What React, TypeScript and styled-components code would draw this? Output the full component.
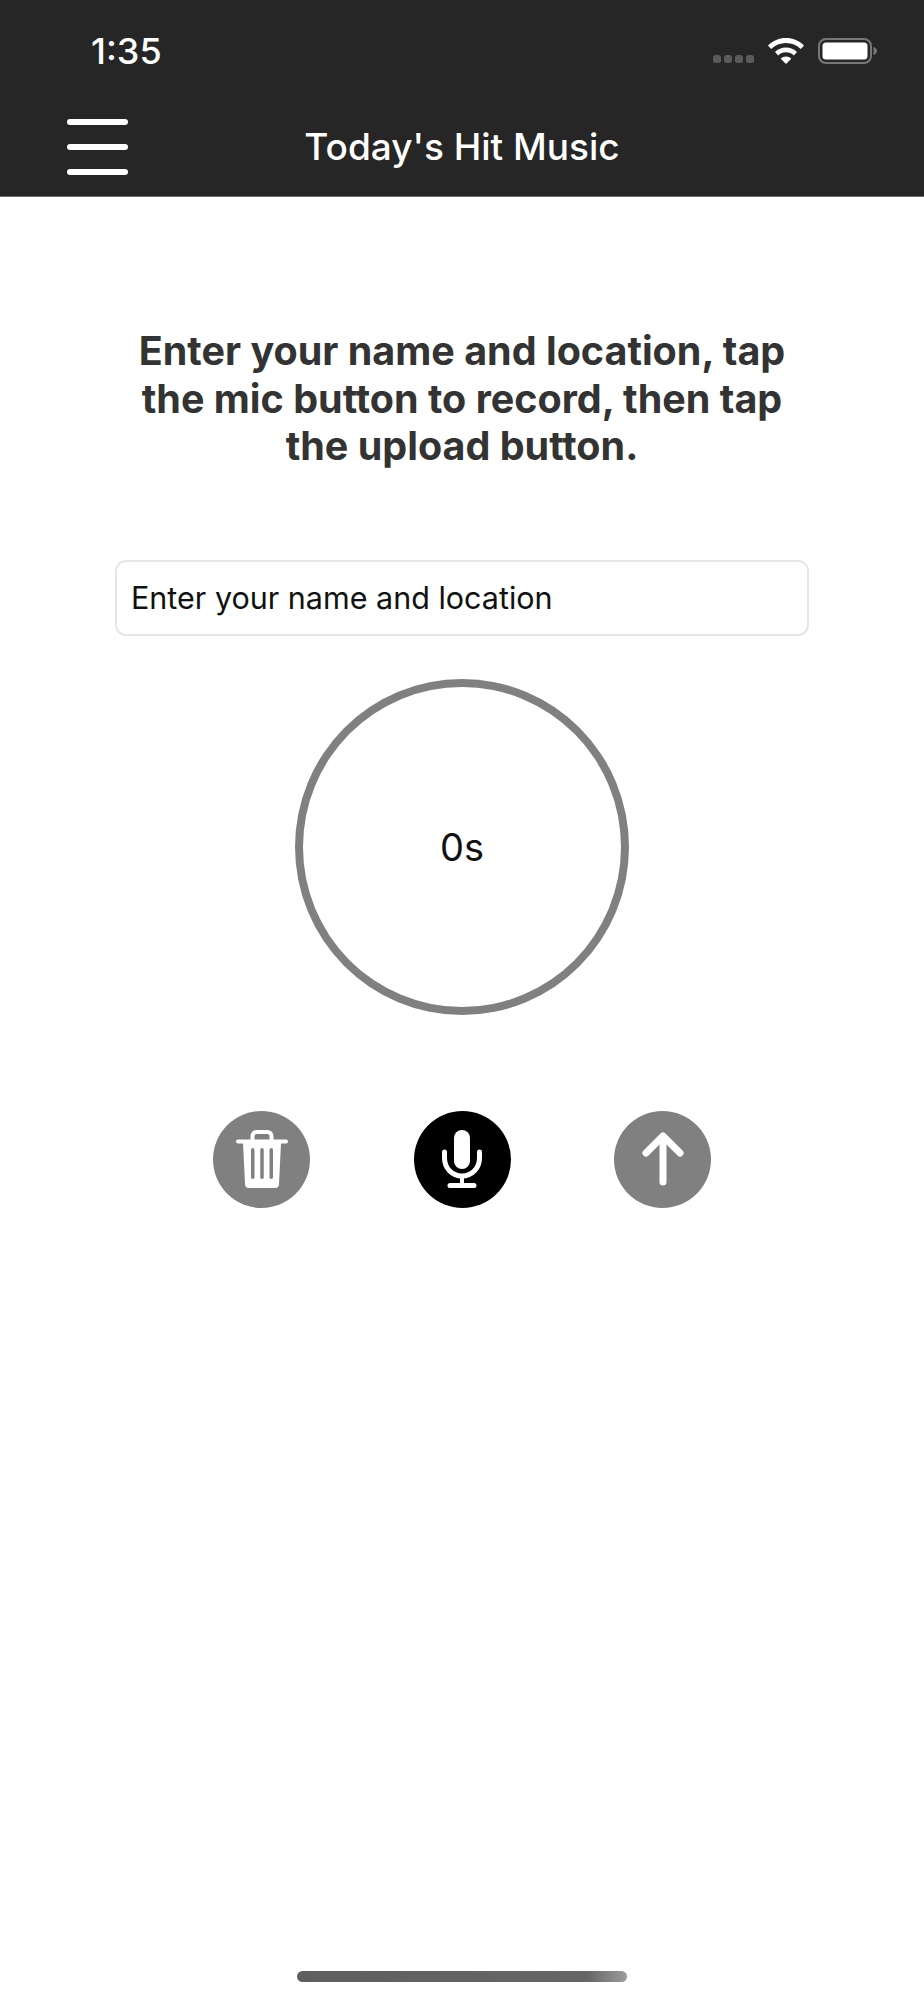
import React from 'react';
import styled, { createGlobalStyle } from 'styled-components';

const GlobalStyle = createGlobalStyle`
  html, body {
    margin: 0;
    padding: 0;
    background: #fff;
  }
  body {
    font-family: Inter, "Liberation Sans", sans-serif;
  }
`;

const Page = styled.div`
  display: flex;
  flex-direction: column;
  width: 924px;
  height: 2000px;
  background: #fff;
  overflow: hidden;
`;

const Header = styled.header`
  flex: none;
  height: 196px;
  background: #262626;
  border-bottom: 1px solid #6e6e6e;
  color: #fff;
`;

const StatusBar = styled.div`
  display: flex;
  align-items: center;
  justify-content: space-between;
  height: 50px;
  padding: 26px 47px 0 91px;
`;

const Time = styled.span`
  font-size: 36px;
  font-weight: 500;
  line-height: 50px;
`;

const StatusIcons = styled.div`
  display: flex;
  align-items: center;
  gap: 14px;
`;

const SignalDots = styled.div`
  display: flex;
  gap: 3px;
  margin-top: 16px;
`;

const SignalDot = styled.span`
  width: 8px;
  height: 8px;
  border-radius: 2.5px;
  background: #5a5a5a;
`;

const NavBar = styled.nav`
  box-sizing: border-box;
  display: grid;
  grid-template-columns: 1fr auto 1fr;
  align-items: center;
  height: 120px;
  padding: 22px 67px 0;
`;

const MenuButton = styled.div`
  display: flex;
  flex-direction: column;
  gap: 19px;
  width: 61px;
`;

const MenuBar = styled.span`
  height: 6px;
  border-radius: 3px;
  background: #fff;
`;

const Title = styled.h1`
  margin: 0;
  font-size: 37px;
  font-weight: 500;
  line-height: 44px;
  white-space: nowrap;
`;

const Main = styled.main`
  flex: 1;
  display: flex;
  flex-direction: column;
  align-items: center;
  padding-top: 131px;
`;

const Heading = styled.h2`
  margin: 0;
  width: 660px;
  color: #333;
  font-size: 39.5px;
  font-weight: 700;
  line-height: 47.5px;
  text-align: center;
`;

const NameInput = styled.input`
  box-sizing: border-box;
  flex: none;
  width: 694px;
  height: 76px;
  margin-top: 89px;
  padding: 0 14px;
  border: 2px solid #e6e6e6;
  border-radius: 11px;
  background: #fff;
  font-family: inherit;
  font-size: 30.5px;
  outline: none;

  &::placeholder {
    color: #111;
    opacity: 1;
  }
`;

const Timer = styled.div`
  box-sizing: border-box;
  flex: none;
  display: flex;
  align-items: center;
  justify-content: center;
  width: 334px;
  height: 336px;
  margin-top: 43px;
  border: 8px solid #808080;
  border-radius: 50%;
  color: #111;
  font-size: 38px;
`;

const Controls = styled.div`
  display: flex;
  gap: 103.5px;
  margin-top: 96px;
`;

const RoundButton = styled.button<{ $active?: boolean }>`
  display: flex;
  align-items: center;
  justify-content: center;
  width: 97px;
  height: 97px;
  padding: 0;
  border: none;
  border-radius: 50%;
  background: ${(p) => (p.$active ? '#000' : '#808080')};
`;

const HomeBar = styled.div`
  flex: none;
  align-self: center;
  width: 330px;
  height: 11px;
  margin-bottom: 18px;
  border-radius: 6px;
  background: linear-gradient(90deg, #5f5f5f 0%, #666 88%, #9c9c9c 100%);
`;

const WifiIcon = () => (
  <svg width="36" height="26" viewBox="0 0 36 26">
    <path d="M18 0C11 0 5 2.600 0 7.400L3.200 11C7 7.200 12.200 5 18 5s11 2.200 14.800 6L36 7.400C31 2.600 25 0 18 0z" fill="#fff" />
    <path d="M18 9.500c-4.300 0-8.200 1.700-11 4.500l3.200 3.500c2-2 4.800-3.200 7.800-3.200s5.800 1.200 7.800 3.200L29 14c-2.800-2.800-6.700-4.500-11-4.500z" fill="#fff" />
    <path d="M18 18.500c-2.100 0-4 .8-5.300 2.200L18 26l5.300-5.300c-1.300-1.400-3.200-2.200-5.300-2.200z" fill="#fff" />
  </svg>
);

const BatteryIcon = () => (
  <svg width="59" height="26" viewBox="0 0 59 26">
    <rect x="1" y="1" width="52" height="24" rx="7" fill="none" stroke="#777" strokeWidth="2" />
    <rect x="4.500" y="4.500" width="45" height="17" rx="3.500" fill="#fff" />
    <path d="M55.500 9c2 .5 3.500 2 3.500 4s-1.500 3.500-3.500 4z" fill="#777" />
  </svg>
);

const TrashIcon = () => (
  <svg width="52" height="58" viewBox="0 0 52 58">
    <path d="M16.500 11V6a4 4 0 0 1 4-4h11a4 4 0 0 1 4 4v5" fill="none" stroke="#fff" strokeWidth="4" />
    <rect x="0" y="9.500" width="52" height="4" rx="2" fill="#fff" />
    <path d="M7 13h38l-2 41a4 4 0 0 1-4 4H13a4 4 0 0 1-4-4z" fill="#fff" />
    <rect x="15" y="18" width="3.500" height="31" rx="1.750" fill="#808080" />
    <rect x="24.250" y="18" width="3.500" height="31" rx="1.750" fill="#808080" />
    <rect x="33.500" y="18" width="3.500" height="31" rx="1.750" fill="#808080" />
  </svg>
);

const MicIcon = () => (
  <svg width="40" height="58" viewBox="0 0 40 58" fill="none" stroke="#fff" strokeLinecap="round">
    <rect x="12" y="0" width="16" height="39" rx="8" fill="#fff" stroke="none" />
    <path d="M2.500 22v6c0 10 7.500 18 17.500 18s17.500-8 17.500-18v-6" strokeWidth="5" />
    <path d="M20 46v9" strokeWidth="4" />
    <path d="M8 55.500h24" strokeWidth="5" />
  </svg>
);

const ArrowIcon = () => (
  <svg width="42" height="54" viewBox="0 0 42 54" fill="none" stroke="#fff" strokeWidth="7" strokeLinecap="round" strokeLinejoin="round">
    <path d="M21 50V5" />
    <path d="M4 21L21 4l17 17" />
  </svg>
);

const App: React.FC = () => {
  return (
    <Page>
      <GlobalStyle />
      <Header>
        <StatusBar>
          <Time>1:35</Time>
          <StatusIcons>
            <SignalDots>
              <SignalDot />
              <SignalDot />
              <SignalDot />
              <SignalDot />
            </SignalDots>
            <WifiIcon />
            <BatteryIcon />
          </StatusIcons>
        </StatusBar>
        <NavBar>
          <MenuButton>
            <MenuBar />
            <MenuBar />
            <MenuBar />
          </MenuButton>
          <Title>Today's Hit Music</Title>
        </NavBar>
      </Header>
      <Main>
        <Heading>Enter your name and location, tap the mic button to record, then tap the upload button.</Heading>
        <NameInput placeholder="Enter your name and location" />
        <Timer>0s</Timer>
        <Controls>
          <RoundButton>
            <TrashIcon />
          </RoundButton>
          <RoundButton $active>
            <MicIcon />
          </RoundButton>
          <RoundButton>
            <ArrowIcon />
          </RoundButton>
        </Controls>
      </Main>
      <HomeBar />
    </Page>
  );
};

export default App;
